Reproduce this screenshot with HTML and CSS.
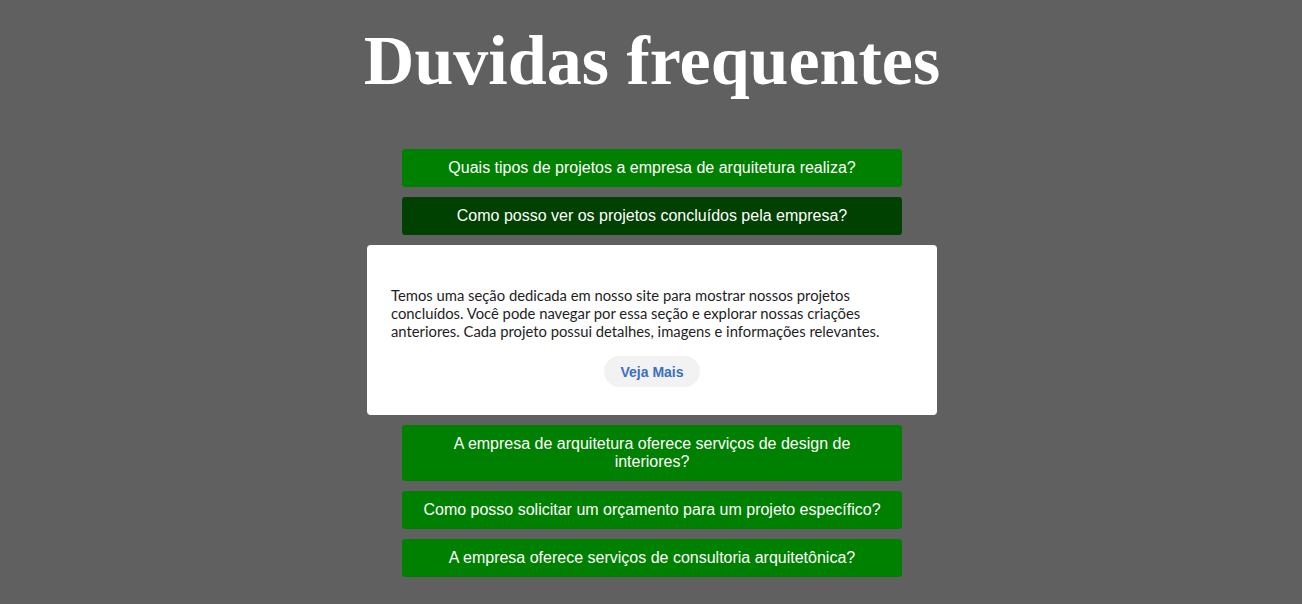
FILE: index.html
```html
<!DOCTYPE html>
<html lang="pt-BR">
<head>
<meta charset="utf-8">
<title>Duvidas frequentes</title>
<link rel="stylesheet" href="styles.css">
</head>
<body>
<main class="faq">
  <h1 class="faq-title">Duvidas frequentes</h1>
  <div class="faq-list">
    <button class="faq-q">Quais tipos de projetos a empresa de arquitetura realiza?</button>
    <button class="faq-q active">Como posso ver os projetos concluídos pela empresa?</button>
    <div class="faq-a">
      <p>Temos uma seção dedicada em nosso site para mostrar nossos projetos concluídos. Você pode navegar por essa seção e explorar nossas criações anteriores. Cada projeto possui detalhes, imagens e informações relevantes.</p>
      <button class="more">Veja Mais</button>
    </div>
    <button class="faq-q">A empresa de arquitetura oferece serviços de design de interiores?</button>
    <button class="faq-q">Como posso solicitar um orçamento para um projeto específico?</button>
    <button class="faq-q">A empresa oferece serviços de consultoria arquitetônica?</button>
  </div>
</main>
</body>
</html>
```

FILE: styles.css
```css
html, body {
  margin: 0;
  padding: 0;
}
body {
  background: #606060;
  font-family: "Liberation Sans", Arial, sans-serif;
}
.faq {
  display: flex;
  flex-direction: column;
  align-items: center;
  padding-left: 2px;
}
.faq-title {
  font-family: "Liberation Serif", "Times New Roman", serif;
  font-weight: bold;
  font-size: 70px;
  line-height: 80px;
  color: #ffffff;
  margin: 21px 0 48px;
}
.faq-list {
  display: flex;
  flex-direction: column;
  align-items: center;
  gap: 10px;
}
.faq-q {
  width: 500px;
  box-sizing: border-box;
  padding: 10px 18px;
  border: none;
  border-radius: 3px;
  background: #008000;
  color: #ffffff;
  font-family: "Liberation Sans", Arial, sans-serif;
  font-size: 16px;
  line-height: 18px;
  text-align: center;
  cursor: pointer;
}
.faq-q.active {
  background: #004000;
}
.faq-a {
  width: 570px;
  box-sizing: border-box;
  background: #ffffff;
  border-radius: 4px;
  padding: 41px 24px 28px;
  display: flex;
  flex-direction: column;
  align-items: center;
}
.faq-a p {
  margin: 0 0 16px;
  font-family: Lato, "Open Sans", sans-serif;
  font-size: 14.8px;
  line-height: 18px;
  color: #1e1e1e;
  align-self: stretch;
}
.more {
  height: 31px;
  padding: 0 16px;
  border: none;
  border-radius: 16px;
  background: #f2f2f2;
  color: #3a70bd;
  font-family: "Liberation Sans", Arial, sans-serif;
  font-weight: bold;
  font-size: 14px;
  cursor: pointer;
}
```
